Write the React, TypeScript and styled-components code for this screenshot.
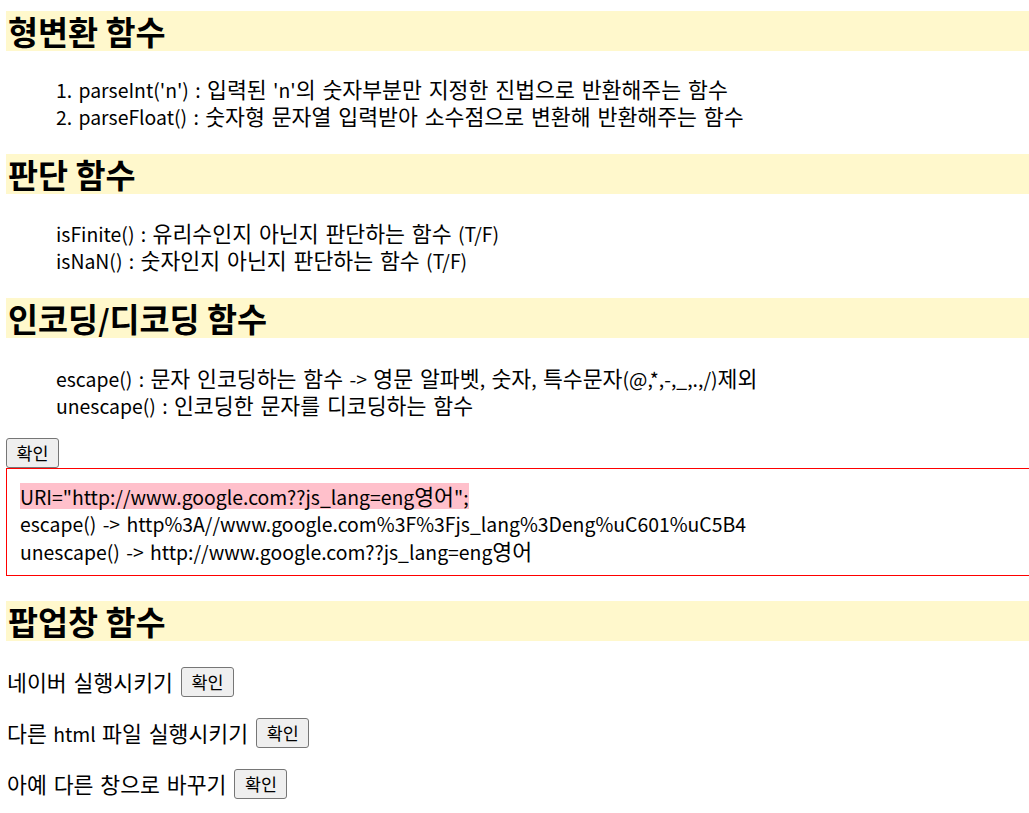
import React from "react";
import styled, { createGlobalStyle } from "styled-components";

const GlobalStyle = createGlobalStyle`
  html, body {
    margin: 0;
    padding: 0;
    overflow: hidden;
    background: #ffffff;
  }
  body {
    font-family: "Noto Sans CJK KR", "Noto Sans", sans-serif;
    color: #000000;
  }
`;

const Page = styled.div`
  display: flex;
  flex-direction: column;
  align-items: flex-start;
  width: 1040px;
  padding: 11px 0 0 6px;
  font-size: 19.4px;
  line-height: 27px;
  word-spacing: 2px;
`;

/* Hangul runs are set a little larger than Latin, as in the reference font */
const Ko = styled.span`
  font-size: 1.115em;
`;

const HANGUL_RUN = /([\u1100-\u11ff\u3130-\u318f\uac00-\ud7af]+(?:\s+[\u1100-\u11ff\u3130-\u318f\uac00-\ud7af]+)*)/;

function ko(text: string): React.ReactNode[] {
  return text
    .split(HANGUL_RUN)
    .map((part, i) => (i % 2 === 1 ? <Ko key={i}>{part}</Ko> : part));
}

const Heading = styled.h2<{ $gap?: number }>`
  align-self: stretch;
  margin: ${(p) => p.$gap ?? 0}px 0 0 0;
  height: 40px;
  padding: 0 2px;
  background: #fff8cc;
  font-size: 29.3px;
  line-height: 40px;
  font-weight: 700;
  word-spacing: 0;
  white-space: nowrap;
`;

const Block = styled.div<{ $gap: number }>`
  display: flex;
  flex-direction: column;
  margin-top: ${(p) => p.$gap}px;
  padding-left: 50px;
`;

const Line = styled.div`
  height: 27px;
  white-space: nowrap;
`;

const Button = styled.button<{ $gap?: number }>`
  margin-top: ${(p) => p.$gap ?? 0}px;
  height: 30px;
  width: 53px;
  padding: 0;
  border: 1px solid #767676;
  border-radius: 3px;
  background: #efefef;
  font-family: "Noto Sans CJK KR", sans-serif;
  font-size: 17.4px;
  line-height: 28px;
  color: #000;
  flex-shrink: 0;
`;

const ResultBox = styled.div`
  align-self: stretch;
  display: flex;
  flex-direction: column;
  align-items: flex-start;
  border: 1px solid #ff0000;
  padding: 14px 13px 11px 13px;
`;

const Highlight = styled.span`
  display: inline-block;
  height: 26px;
  line-height: 26px;
  background: #ffc0cb;
`;

const Row = styled.div<{ $gap: number }>`
  display: flex;
  align-items: center;
  gap: 8px;
  height: 31px;
  margin-top: ${(p) => p.$gap}px;
  padding-left: 1px;
  white-space: nowrap;
`;

export default function App() {
  return (
    <>
      <GlobalStyle />
      <Page>
        <Heading>{ko("형변환 함수")}</Heading>
        <Block $gap={24}>
          <Line>{ko("1. parseInt('n') : 입력된 'n'의 숫자부분만 지정한 진법으로 반환해주는 함수")}</Line>
          <Line>{ko("2. parseFloat() : 숫자형 문자열 입력받아 소수점으로 변환해 반환해주는 함수")}</Line>
        </Block>

        <Heading $gap={25}>{ko("판단 함수")}</Heading>
        <Block $gap={25}>
          <Line>{ko("isFinite() : 유리수인지 아닌지 판단하는 함수 (T/F)")}</Line>
          <Line>{ko("isNaN() : 숫자인지 아닌지 판단하는 함수 (T/F)")}</Line>
        </Block>

        <Heading $gap={25}>{ko("인코딩/디코딩 함수")}</Heading>
        <Block $gap={26}>
          <Line>{ko("escape() : 문자 인코딩하는 함수 -> 영문 알파벳, 숫자, 특수문자(@,*,-,_,.,/)제외")}</Line>
          <Line>{ko("unescape() : 인코딩한 문자를 디코딩하는 함수")}</Line>
        </Block>

        <Button $gap={20}>확인</Button>
        <ResultBox>
          <Line>
            <Highlight>{ko('URI="http://www.google.com??js_lang=eng영어";')}</Highlight>
          </Line>
          <Line>{ko("escape() -> http%3A//www.google.com%3F%3Fjs_lang%3Deng%uC601%uC5B4")}</Line>
          <Line>{ko("unescape() -> http://www.google.com??js_lang=eng영어")}</Line>
        </ResultBox>

        <Heading $gap={25}>{ko("팝업창 함수")}</Heading>
        <Row $gap={25}>
          <span>{ko("네이버 실행시키기")}</span>
          <Button>확인</Button>
        </Row>
        <Row $gap={20}>
          <span>{ko("다른 html 파일 실행시키기")}</span>
          <Button>확인</Button>
        </Row>
        <Row $gap={20}>
          <span>{ko("아예 다른 창으로 바꾸기")}</span>
          <Button>확인</Button>
        </Row>
      </Page>
    </>
  );
}
